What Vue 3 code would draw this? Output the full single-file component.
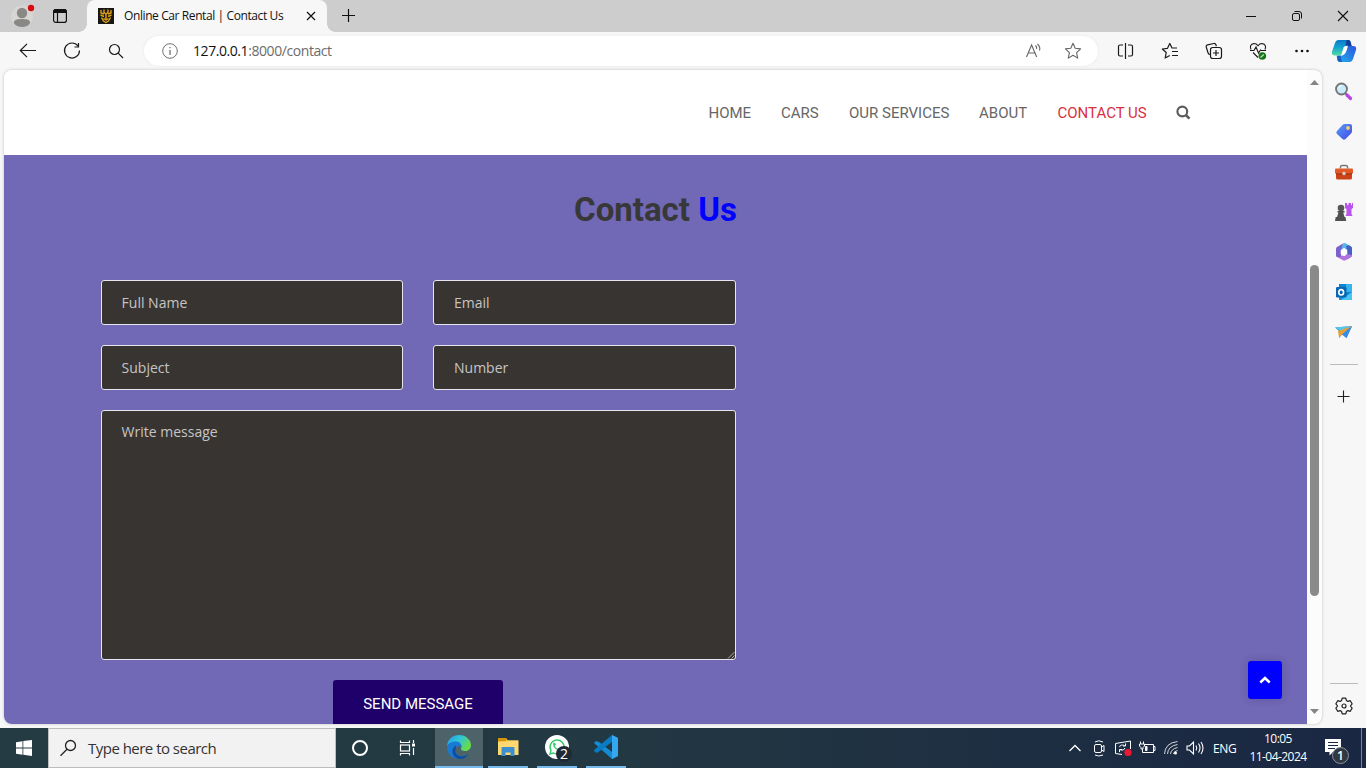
<script setup>
const navItems = [
  { label: 'HOME', cls: 'n-home' },
  { label: 'CARS', cls: 'n-cars' },
  { label: 'OUR SERVICES', cls: 'n-services' },
  { label: 'ABOUT', cls: 'n-about' },
  { label: 'CONTACT US', cls: 'n-contact' },
]
const fields = ['Full Name', 'Email', 'Subject', 'Number']
</script>

<template>
  <div class="screen">
    <header class="tabs">
      <svg class="avatar" width="24" height="26" viewBox="0 0 24 26">
        <circle cx="11" cy="15.500" r="11" fill="#d8d6d2" />
        <circle cx="11" cy="12" r="5.200" fill="#8a8886" />
        <path d="M2.800 22c0-3.500 3.500-4 8.200-4s8.200.5 8.200 4c-2 3.200-5 4-8.200 4s-6.200-.8-8.200-4z" fill="#8a8886" />
        <circle cx="20" cy="7" r="3.200" fill="#d60b12" />
      </svg>
      <svg class="workspaces" width="16" height="16" viewBox="0 0 16 16" fill="none" stroke="#111">
        <rect x="1.600" y="1.600" width="12.800" height="12.800" rx="2.200" stroke-width="1.200" />
        <path d="M1.500 4.500V3.500q0-2 2-2h9q2 0 2 2v1z" fill="#111" />
        <path d="M5.500 5v9" stroke-width="1.200" />
      </svg>
      <div class="tab">
        <svg class="favicon" width="16" height="16" viewBox="0 0 16 16">
          <rect width="16" height="16" fill="#171713" />
          <g fill="none" stroke="#e0a01c" stroke-width="1.400">
            <path d="M3 2v3l3 1M13 2v3l-3 1M6 1.500v3l2 1.500 2-1.500v-3M2.500 7l3.500 1.500M13.500 7L10 8.500M3.500 9.500l2 3.500L8 14.500l2.500-1.500 2-3.500M8 6v5M5.500 10.500L8 12l2.500-1.500" />
          </g>
        </svg>
        <span class="tab-title">Online Car Rental | Contact Us</span>
        <svg class="tab-close" width="10" height="10" viewBox="0 0 10 10" stroke="#111" stroke-width="1.200"><path d="M1 1l8 8M9 1l-8 8" /></svg>
      </div>
      <svg class="new-tab" width="14" height="14" viewBox="0 0 14 14" stroke="#111" stroke-width="1.200"><path d="M6.500 0v13M0 6.500h13" /></svg>
      <div class="window-controls">
        <svg width="46" height="32" viewBox="0 0 46 32"><path d="M18 16.500h10" stroke="#111" /></svg>
        <svg width="46" height="32" viewBox="0 0 46 32" fill="none" stroke="#111">
          <rect x="18.500" y="13.500" width="7" height="7" rx="1.500" /><path d="M20.500 11.500h4.500q2.500 0 2.500 2.500v4.500" />
        </svg>
        <svg width="46" height="32" viewBox="0 0 46 32" stroke="#111" stroke-width="1.150"><path d="M18 11l10 10M28 11l-10 10" /></svg>
      </div>
    </header>

    <div class="toolbar">
      <svg width="44" height="38" viewBox="0 0 44 38" fill="none" stroke="#1a1a1a" stroke-width="1.200"><path d="M30 18.500H14.500M21 11.800l-6.700 6.700 6.700 6.700" /></svg>
      <svg width="44" height="38" viewBox="0 0 44 38" fill="none" stroke="#1a1a1a" stroke-width="1.200"><path d="M28 14a7.500 7.500 0 1 0 1.500 4.500M28.500 11v4h-4" /></svg>
      <svg width="44" height="38" viewBox="0 0 44 38" fill="none" stroke="#1a1a1a" stroke-width="1.200"><circle cx="20.500" cy="17.500" r="5" /><path d="M24.200 21.200l4.800 4.800" /></svg>
      <div class="address">
        <svg class="info" width="16" height="16" viewBox="0 0 16 16" fill="none" stroke="#707070"><circle cx="8" cy="8" r="7.300" /><path d="M8 7v5M8 4v1.300" stroke-width="1.300" /></svg>
        <span class="url"><b>127.0.0.1</b>:8000/contact</span>
        <svg class="read" width="18" height="18" viewBox="0 0 18 18" fill="none" stroke="#666" stroke-width="1.100"><path d="M2.500 15L7.600 3l5.100 12M4.300 11h6.600M11.500 3.500q1.500 1.500 1.200 3.500M13.500 2q3.200 3 2 6.500" /></svg>
        <svg class="star" width="18" height="18" viewBox="0 0 18 18" fill="none" stroke="#666" stroke-width="1.100"><path d="M9 1.300l2.200 5 5.400.6-4 3.700 1.100 5.500L9 13.300l-4.700 2.800 1.100-5.500-4-3.700 5.400-.6z" stroke-linejoin="round" /></svg>
      </div>
      <svg width="44" height="38" viewBox="0 0 44 38" fill="none" stroke="#1a1a1a" stroke-width="1.200"><path d="M19 13h-3q-1.500 0-1.500 1.500v8q0 1.500 1.500 1.500h3M24 13h3q1.500 0 1.500 1.500v8q0 1.500-1.500 1.500h-3M21.500 11v16" /></svg>
      <svg width="44" height="38" viewBox="0 0 44 38" fill="none" stroke="#1a1a1a" stroke-width="1.200" stroke-linejoin="round"><path d="M29 16h-5l-2.200-4.500-2.300 4.800-5.200.7 3.900 3.500-1 5.500 4.500-2.600M24 19.500h6M24 23.500h6" /></svg>
      <svg width="44" height="38" viewBox="0 0 44 38" fill="none" stroke="#1a1a1a" stroke-width="1.200"><path d="M18 22.500q-1.500-.2-2-1.700l-1.700-5.500q-.6-2 1.300-2.500l6.300-1.300q1.500-.2 2 1.200l.5 1.500" /><rect x="18.500" y="15.500" width="11" height="11" rx="2.200" /><path d="M24 18v6M21 21h6" /></svg>
      <svg width="44" height="38" viewBox="0 0 44 38" fill="none" stroke="#1a1a1a" stroke-width="1.100"><path d="M15 17.500q-2-5 3-6 2.500 0 4 2.200 1.500-2.200 4-2.200 5 1 3 6M17 20.500l5 5M14 18.500h4l2-3.500 2.500 6 2-3 .8.500H30" /><circle cx="26.300" cy="24" r="3.800" fill="#167719" stroke="none" /><path d="M24.500 25.500l3.300-3" stroke="#b7e5b4" stroke-width="1.200" /></svg>
      <svg width="44" height="38" viewBox="0 0 44 38" fill="#111"><circle cx="16.500" cy="19" r="1.300" /><circle cx="22" cy="19" r="1.300" /><circle cx="27.500" cy="19" r="1.300" /></svg>
      <svg class="copilot" width="26" height="24" viewBox="0 0 26 24">
        <defs>
          <linearGradient id="cpA" x1="0" y1="0" x2="0" y2="1"><stop offset="0" stop-color="#0b79c9" /><stop offset=".5" stop-color="#16a6cf" /><stop offset="1" stop-color="#55dd9f" /></linearGradient>
          <linearGradient id="cpB" x1="1" y1="0" x2="0" y2="1"><stop offset="0" stop-color="#2d55dc" /><stop offset="1" stop-color="#22b2ee" /></linearGradient>
        </defs>
        <path d="M7.500 1H17q2 0 2.600 2l.8 4h-3q-3 0-3.800 2.700l-1.300 4q-.8 2.800-4 2.800H4q-4 0-3-4L4 4q1-3 3.500-3z" fill="url(#cpA)" />
        <path d="M18.500 23H9q-2 0-2.600-2l-.8-4.500h2q3 0 3.800-2.600l1.500-4.300Q13.700 7 16.800 7H22q4 0 3 4l-3 9q-1 3-3.500 3z" fill="url(#cpB)" />
        <path d="M14.500 7.500L15.500 1h2q1.700 0 2.200 2l1 4z" fill="#123f9c" />
        <path d="M6 17h3.500l1.500 6H9q-2 0-2.600-2z" fill="#1a5fc4" />
        <path d="M12.500 8.500q1-2 4.500-1.700l-1.500 5q-1.600 5-6.500 5.200 1-.5 1.700-2.300z" fill="#fff" />
      </svg>
    </div>

    <div class="workspace">
      <section class="viewport">
        <div class="page">
          <nav class="nav">
            <a v-for="item in navItems" :key="item.label" :class="item.cls">{{ item.label }}</a>
            <svg width="15" height="15" viewBox="0 0 15 15" fill="none" stroke="#5c5c5c"><circle cx="6.300" cy="6.500" r="4.900" stroke-width="2.100" /><path d="M9.800 10l3.700 3.700" stroke-width="2.500" /></svg>
          </nav>
          <div class="contact">
            <h1>Contact <span>Us</span></h1>
            <form class="form">
              <div v-for="field in fields" :key="field" class="input">{{ field }}</div>
              <div class="input message">
                Write message
                <svg class="grip" width="8" height="8" viewBox="0 0 8 8" stroke="#ccc" stroke-width=".8"><path d="M1 7.500L7.500 1M4.500 7.500l3-3" /></svg>
              </div>
            </form>
            <div class="send">SEND MESSAGE</div>
            <div class="to-top">
              <svg width="12" height="8" viewBox="0 0 12 8" fill="none" stroke="#fff" stroke-width="2.500"><path d="M1.300 6.500L6 2l4.700 4.500" /></svg>
            </div>
          </div>
        </div>
        <div class="scrollbar">
          <svg width="9" height="5" viewBox="0 0 9 5" fill="#858585"><path d="M4.500 0L9 5H0z" /></svg>
          <div class="thumb"></div>
          <svg width="9" height="5" viewBox="0 0 9 5" fill="#858585"><path d="M4.500 5L9 0H0z" /></svg>
        </div>
      </section>

      <aside class="sidebar">
        <svg width="20" height="20" viewBox="0 0 20 20"><path d="M11.500 11.500l2 2" stroke="#666" stroke-width="2" /><path d="M13 13l3.500 3.500" stroke="#b747e0" stroke-width="3.200" stroke-linecap="round" /><circle cx="7.500" cy="7" r="5.500" fill="#c9eafa" stroke="#737373" stroke-width="1.800" /><path d="M5 6.500q0-2.500 2.500-3" stroke="#fff" fill="none" /></svg>
        <svg width="20" height="20" viewBox="0 0 20 20"><defs><linearGradient id="tg" x1="0" y1="0" x2="1" y2="1"><stop stop-color="#55a2f5" /><stop offset="1" stop-color="#4544e8" /></linearGradient></defs><path d="M10.500 2H16q2 0 2 2v5.500q0 1-1 2L11.500 17q-1.500 1.500-3 0L3 12q-1.500-1.500 0-3l5.500-6q1-1 2-1z" fill="url(#tg)" /><circle cx="14" cy="6" r="1.900" fill="#f5ce65" /></svg>
        <svg width="20" height="20" viewBox="0 0 20 20"><path d="M6.500 6.500V5Q6.500 3.500 8 3.500h4q1.500 0 1.500 1.500v1.500" fill="none" stroke="#777" stroke-width="1.400" /><path d="M2 7h16v9q0 1.500-1.500 1.500h-13Q2 17.500 2 16z" fill="#cc4317" /><path d="M1 7.500q0-1 1-1h16q1 0 1 1v4H1z" fill="#e15a27" /><path d="M2 12h16" stroke="#9b2e12" /><circle cx="10" cy="11.500" r="1.800" fill="#d6cec8" /></svg>
        <svg width="20" height="20" viewBox="0 0 20 20"><path d="M11 1h2v2h1.500V1H17v2h1V1h1v5l-1.500 1v5l1 2h-7l1-2V7L11 6z" fill="#b954ee" /><circle cx="7" cy="6" r="3.300" fill="#555" /><path d="M3.500 9h7v1.500H9.200L10.500 15h1l.7 4H1l.7-4h1.300l1.500-4.500h-1z" fill="#505050" /></svg>
        <svg width="20" height="20" viewBox="0 0 20 20"><path d="M9 1.500q1.500-.8 3 0L17 4.500q1 .7 1 2V11l-5-3-3-2-5 4z" fill="#58b7ea" /><path d="M18 6.500V13q0 1.300-1 2l-4 2.500-1.500-5L13 8l-1-4 3-.7 2 1.200q1 .7 1 2z" fill="#4660c8" /><path d="M2 11l5 2.500 4 .5 2-2 5 1q0 1.300-1 2l-5 3q-1.700 1-3.400 0L3 15q-1-.8-1-2z" fill="#b171df" /><path d="M2 7q0-1.300 1-2l6-3.500L7.500 7 7 12v3L3 15q-1-.7-1-2z" fill="#7962cc" /><path d="M10 6.300l3.300 1.900V12L10 13.800 6.700 12V8.200z" fill="#fff" /></svg>
        <svg width="20" height="20" viewBox="0 0 20 20"><path d="M5 2h12q1 0 1 1v14q0 1-1 1H5z" fill="#0f83d0" /><path d="M12 2h5q1 0 1 1v7h-6z" fill="#36b4ed" /><path d="M5 10l7 4 6-4v7q0 1-1 1H5z" fill="#1a8ed9" /><path d="M7 18l11-8v7q0 1-1 1z" fill="#4ac5f0" /><rect x="2" y="5" width="10.500" height="10.500" rx="1.300" fill="#0867b4" /><ellipse cx="7.200" cy="10.300" rx="2.400" ry="2.700" fill="none" stroke="#fff" stroke-width="1.600" /></svg>
        <svg width="20" height="20" viewBox="0 0 20 20"><path d="M1 5.500l17-1.500-5.500 12-4.300-3.500L5 16V9z" fill="#2d86df" /><path d="M1 5.500l17-1.500L7 9z" fill="#54c8ed" /><path d="M4 9L18 4 8.200 12.500 5 15.500z" fill="#e5a136" /><path d="M18 4l-5.500 12-4.300-3.500z" fill="#348de8" /></svg>
        <i class="rule"></i>
        <svg class="plus" width="14" height="14" viewBox="0 0 14 14" stroke="#222" stroke-width="1.100"><path d="M6.500 .5v12M.5 6.500h12" /></svg>
        <i class="rule bottom"></i>
        <svg class="gear" width="18" height="18" viewBox="0 0 18 18" fill="none" stroke="#222" stroke-width="1.200" stroke-linejoin="round"><path d="M7.200 1.200h3.600l.6 2.300 1.500.9 2.400-.7 1.800 3.100L15.400 9l1.700 2.200-1.800 3.100-2.400-.7-1.500.9-.6 2.300H7.200l-.6-2.300-1.500-.9-2.400.7-1.800-3.100L2.600 9 .9 6.800l1.800-3.100 2.400.7 1.500-.9z" /><circle cx="9" cy="9" r="2" /></svg>
      </aside>
    </div>

    <footer class="taskbar">
      <svg class="start" width="48" height="40" viewBox="0 0 48 40" fill="#fff"><path d="M16 14.200l6.500-1v6.300H16zM23.300 13.100l8.700-1.200v7.600h-8.700zM16 20.400h6.500v6.300l-6.500-.9zM23.300 20.400H32V28l-8.700-1.200z" /></svg>
      <div class="search">
        <svg width="18" height="18" viewBox="0 0 18 18" fill="none" stroke="#222" stroke-width="1.300"><circle cx="10.500" cy="6.500" r="5" /><path d="M7 10.200L.5 16.700" /></svg>
        <span>Type here to search</span>
      </div>
      <svg width="48" height="40" viewBox="0 0 48 40" fill="none" stroke="#fff" stroke-width="2"><circle cx="24" cy="20" r="7" /></svg>
      <svg width="51" height="40" viewBox="0 0 51 40" fill="none" stroke="#fff" stroke-width="1.200"><path d="M16.500 12.500v2h9v-2M16.500 27.500v-2h9v2M29.500 12v3M29.500 20v7" /><rect x="16.500" y="17" width="9" height="6" /><path d="M28 17h3" stroke-width="3" /></svg>
      <div class="app active">
        <svg width="24" height="24" viewBox="0 0 24 24"><defs><linearGradient id="eg" x1="0" x2="1" y2=".5"><stop stop-color="#2196e3" /><stop offset=".5" stop-color="#30c4da" /><stop offset="1" stop-color="#67dc4a" /></linearGradient></defs><path d="M0 12C0 4 6 0 12 0c7 0 12 5 12 10 0 4-3 6-6 6-2.500 0-4.500-1-4-2.500 1.500-3-1-6-5-6-5 0-9 2-9 4.500z" fill="url(#eg)" /><path d="M0 12c1-4 5-5.500 9-5.500 4 0 6 3 5.500 6-2-3-7-1-6 3.500 1 5 8 7 13 3-2 3.500-5.500 5-9.500 5C5 24 0 19 0 12z" fill="#1979d3" /><path d="M8.500 15c-1 5 6 9 13 4-3 5-8 6-11 4.500C4 21 4 13 9 10.500z" fill="#104d9d" /></svg>
      </div>
      <div class="app short">
        <svg width="24" height="24" viewBox="0 0 24 24"><path d="M2 3h8l2 2.500h10V20H2z" fill="#f0b72d" /><path d="M2 3h8v3H2z" fill="#d4940b" /><path d="M2 7l8-.5L12 5.500h10.500V20H2z" fill="#ffd970" /><path d="M5.500 21v-8q0-1 1-1h11q1 0 1 1v8h-4v-3.500h-5V21z" fill="#3c8fcc" /></svg>
      </div>
      <div class="app short">
        <svg width="24" height="24" viewBox="0 0 24 24"><circle cx="12" cy="12" r="12" fill="#fff" /><path d="M5 19l1-3.500a7 7 0 1 1 2.500 2.500z" fill="none" stroke="#31c968" stroke-width="1.400" /><path d="M9 8q-1 3 2 5.500t5 1M9 8l1.500 2M14 13l2 1" fill="none" stroke="#31c968" stroke-width="1.300" /></svg>
        <span class="badge">2</span>
      </div>
      <div class="app short">
        <svg width="24" height="24" viewBox="0 0 24 24"><path d="M18 0l6 3v18l-6 3L0 8l2-2 3 1 13 10z" fill="#168bd3" /><path d="M18 0v7L3 18l-3-2v-1z" fill="#087bc3" /><path d="M18 0l6 3v18l-6 3z" fill="#35a7ef" /></svg>
      </div>
      <div class="tray">
        <svg width="24" height="24" viewBox="0 0 24 24" fill="none" stroke="#fff" stroke-width="1.300"><path d="M6.500 15l5.500-5.500 5.500 5.500" /></svg>
        <svg width="24" height="24" viewBox="0 0 24 24" fill="none" stroke="#fff"><rect x="7.500" y="8.500" width="7" height="8" rx="1.500" /><path d="M14.500 11l2.500-1.500v6L14.500 14M8 6q3.500-2.500 8 0M8 19q3.500 2 8 0" /></svg>
        <svg width="24" height="24" viewBox="0 0 24 24" fill="none" stroke="#fff"><path d="M11 18.500l-6.500-1v-10l15-2.500v8M8.500 11q1-3 5-1.500M14.500 7.500v2.500H12M14 12q-1 3-4.500 2M8.500 16v-2.500H11" /><circle cx="17" cy="16.500" r="3.600" fill="#ed1932" stroke="none" /></svg>
        <svg class="battery" width="24" height="24" viewBox="0 0 24 24" fill="none" stroke="#fff"><path d="M10 8.500h8.500v8h-11V13M18.500 10.500H20v4h-1.500M5.500 5.500V8M8.500 5.500V8M4.500 8h5v2L8 11.500V13H6v-1.500L4.500 10z" /><path d="M10.500 10.500h1.500v4h-1.500z" fill="#fff" /></svg>
        <svg width="24" height="24" viewBox="0 0 24 24" fill="none" stroke="#fff"><path d="M4.500 18Q5 7 17.500 5.500M7.500 18Q8 10 17.500 8.500M10.500 18Q11 13 17.500 11.500M13.500 18q0-2.500 4-3.500" stroke-opacity=".8" /><circle cx="15.500" cy="17" r="1.500" fill="#fff" stroke="none" /></svg>
        <svg class="volume" width="24" height="24" viewBox="0 0 24 24" fill="none" stroke="#fff" stroke-width="1.100"><path d="M4 10h2.500l4-4v12l-4-4H4zM13 9.500q1.500 2.500 0 5M15.500 7.500q3 4.500 0 9M18 6q4 6 0 12" /></svg>
        <span class="lang">ENG</span>
        <div class="clock"><span class="time">10:05</span><span class="date">11-04-2024</span></div>
        <div class="notice">
          <svg width="17" height="17" viewBox="0 0 17 17"><path d="M0 0h16v13H8l-3.500 3.500V13H0z" fill="#fff" /><path d="M3 3.500h10M3 6.500h10M3 9.500h7" stroke="#1c2b43" /></svg>
          <span class="count">1</span>
        </div>
        <i class="edge-line"></i>
      </div>
    </footer>
  </div>
</template>

<style>
html, body { margin: 0; overflow: hidden; }
</style>

<style scoped>
* { box-sizing: border-box; }
svg { display: block; flex: none; }
.screen { width: 1366px; height: 768px; display: flex; flex-direction: column; overflow: hidden; background: #f7f7f7; font-family: "Open Sans", "Noto Sans", sans-serif; }
.tabs { height: 32px; flex: none; display: flex; align-items: flex-start; background: #cdcdcd; padding-left: 11px; }
.avatar { margin-top: 1px; }
.workspaces { margin: 8px 0 0 17px; }
.tab { position: relative; width: 240px; height: 32px; margin-left: 19px; padding-left: 11px; background: #f7f7f7; border-radius: 8px 8px 0 0; display: flex; align-items: center; }
.tab::before, .tab::after { content: ""; position: absolute; bottom: 0; width: 8px; height: 8px; }
.tab::before { left: -8px; background: radial-gradient(circle at 0 0, #cdcdcd 7.500px, #f7f7f7 8px); }
.tab::after { right: -8px; background: radial-gradient(circle at 100% 0, #cdcdcd 7.500px, #f7f7f7 8px); }
.tab-title { width: 182px; margin-left: 10px; font-size: 12px; letter-spacing: -.4px; line-height: 32px; color: #111; white-space: nowrap; }
.new-tab { margin: 9px 0 0 15px; }
.window-controls { display: flex; margin-left: auto; }
.toolbar { height: 38px; flex: none; display: flex; align-items: center; padding-left: 6px; }
.address { width: 954px; height: 30px; margin: 0 6px; border-radius: 15px; background: #fff; box-shadow: 0 0 3px #e6e6e6; display: flex; align-items: center; padding: 0 16px 0 18px; }
.url { margin-left: 15px; font-size: 14px; letter-spacing: -.43px; line-height: 20px; margin-top: -1px; color: #6c6c6c; white-space: nowrap; }
.url b { font-weight: 400; color: #111; }
.read { margin-left: auto; }
.star { margin-left: 22px; }
.copilot { margin-left: 7px; }
.workspace { height: 658px; flex: none; display: flex; padding-left: 4px; }
.viewport { width: 1318px; height: 654px; display: flex; border-radius: 8px; overflow: hidden; background: #fcfcfc; box-shadow: 0 0 3px #bbb; }
.page { width: 1303px; display: flex; flex-direction: column; }
.nav { height: 85px; flex: none; background: #fff; display: flex; align-items: center; padding-left: 704.500px; font-family: Roboto, sans-serif; font-size: 15px; color: #666; white-space: nowrap; }
.n-home { width: 72.500px; }
.n-cars { width: 68px; }
.n-services { width: 130px; }
.n-about { width: 78.500px; }
.n-contact { width: 118px; color: #d9303e; }
.contact { position: relative; height: 569px; overflow: hidden; background: #7168b6; }
h1 { margin: 0; padding-top: 35px; height: 125px; line-height: 40px; text-align: center; font-family: Roboto, sans-serif; font-size: 33px; font-weight: 700; color: #383838; }
h1 span { color: #00f; }
.form { margin-left: 97px; width: 635px; display: grid; grid-template-columns: 302px 303px; grid-template-rows: 45px 45px 250px; column-gap: 30px; row-gap: 20px; }
.input { border: 1px solid #e7e5ef; border-radius: 3px; background: #383432; color: #c6c4c2; font-size: 14px; line-height: 43px; padding-left: 19.600px; }
.input:nth-child(2), .input:nth-child(4) { padding-left: 20px; }
.message { position: relative; grid-column: 1 / 3; line-height: 42px; }
.grip { position: absolute; right: 0; bottom: 0; }
.send { width: 170px; height: 48px; margin: 20px 0 0 329px; border-radius: 3px 3px 0 0; background: #1f006b; color: #fff; font-family: Roboto, sans-serif; font-size: 15px; line-height: 48px; text-align: center; }
.to-top { position: absolute; left: 1244px; top: 506px; width: 34px; height: 38px; border-radius: 3px; background: #00f; box-shadow: 0 0 10px rgba(0,0,0,.15); display: flex; align-items: center; justify-content: center; }
.scrollbar { width: 15px; display: flex; flex-direction: column; align-items: center; padding: 10px 0; }
.thumb { width: 9px; height: 331px; margin: 180px 0 113px; border-radius: 5px; background: #8a8a8a; }
.sidebar { width: 44px; display: flex; flex-direction: column; align-items: center; padding-top: 12px; gap: 20px; }
.rule { width: 28px; height: 1px; flex: none; background: #bbb; margin-top: 2px; }
.plus { margin-top: 5px; }
.rule.bottom { margin-top: 259px; }
.gear { margin-top: -7px; }
.taskbar { height: 40px; flex: none; display: flex; background: linear-gradient(90deg, #243b43 0, #223842 45%, #1d2e42 75%, #1a2743 100%); color: #fff; }
.search { width: 288px; height: 40px; background: #f2f2f2; border: 1px solid #bdbdbd; display: flex; align-items: center; padding-left: 11px; color: #333; }
.search span { margin-left: 10px; font-size: 15px; letter-spacing: -.52px; }
.app { position: relative; width: 48px; height: 40px; display: flex; align-items: center; justify-content: center; border-bottom: 2px solid #76b9ed; }
.app.short { width: 40px; margin-left: 9px; }
.app.active { background: #4e626a; }
.active + .short { margin-left: 5px; }
.badge { position: absolute; right: 5px; bottom: 4px; width: 16px; height: 16px; border-radius: 50%; background: #202a34; font-size: 14px; line-height: 16px; text-align: center; }
.tray { margin-left: auto; width: 303px; display: flex; align-items: center; }
.battery { margin-right: 1px; }
.volume { margin-left: -1px; }
.lang { width: 36px; margin-left: 6px; font-size: 12px; letter-spacing: -.4px; }
.clock { width: 60px; margin-left: -1px; font-size: 12px; line-height: 18px; letter-spacing: -.55px; display: flex; flex-direction: column; align-items: center; white-space: nowrap; }
.notice { position: relative; margin-left: 17px; width: 24px; height: 24px; padding-top: 3px; }
.count { position: absolute; left: 7px; top: 11px; width: 17px; height: 17px; border: 1px solid #8c929b; border-radius: 50%; background: #303942; font-size: 12px; font-weight: 600; line-height: 15px; text-align: center; }
.edge-line { width: 1px; height: 40px; margin-left: 12px; background: #7b8493; }
</style>
